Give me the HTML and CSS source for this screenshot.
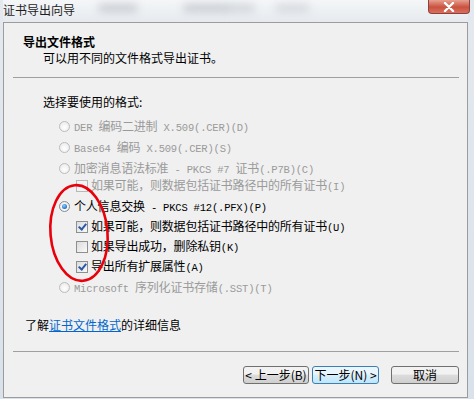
FILE: index.html
```html
<!DOCTYPE html>
<html>

<head lang="zh-CN">
    <meta charset="UTF-8">
    <title>证书导出向导</title>
    <link rel="stylesheet" href="styles.css">
</head>

<body>
    <div class="window">
        <!-- 标题栏 -->
        <div class="titlebar">
            <span class="title">证书导出向导</span>
            <i class="blur b1"></i><i class="blur b2"></i><i class="blur b3"></i><i class="blur b4"></i>
            <a href="#" class="close">
                <svg width="12" height="10" viewBox="0 0 12 10">
                    <path d="M2 1 L10 9 M10 1 L2 9" stroke="#fff" stroke-width="2.4" stroke-linecap="round" />
                </svg>
            </a>
        </div>

        <div class="client">
            <div class="header">
                <h1>导出文件格式</h1>
                <p>可以用不同的文件格式导出证书。</p>
            </div>

            <div class="content">
                <p class="prompt">选择要使用的格式:</p>
                <ul class="options">
                    <li class="row off"><span class="radio"></span><span class="mono">DER </span>编码二进制<span class="mono"> X.509(.CER)(D)</span></li>
                    <li class="row off"><span class="radio"></span><span class="mono">Base64 </span>编码<span class="mono"> X.509(.CER)(S)</span></li>
                    <li class="row off"><span class="radio"></span>加密消息语法标准<span class="mono"> - PKCS #7 </span>证书<span class="mono">(.P7B)(C)</span></li>
                    <li class="row sub off first"><span class="check"></span>如果可能，则数据包括证书路径中的所有证书<span class="mono">(I)</span></li>
                    <li class="row"><span class="radio on"></span>个人信息交换<span class="mono"> - PKCS #12(.PFX)(P)</span></li>
                    <li class="row sub"><span class="check on"></span>如果可能，则数据包括证书路径中的所有证书<span class="mono">(U)</span></li>
                    <li class="row sub"><span class="check"></span>如果导出成功，删除私钥<span class="mono">(K)</span></li>
                    <li class="row sub"><span class="check on"></span>导出所有扩展属性<span class="mono">(A)</span></li>
                    <li class="row off"><span class="radio"></span><span class="mono">Microsoft </span>序列化证书存储<span class="mono">(.SST)(T)</span></li>
                </ul>
                <p class="more">了解<a href="#">证书文件格式</a>的详细信息</p>
            </div>

            <div class="footer">
                <button class="btn">&lt; 上一步(B)</button>
                <button class="btn focus">下一步(N) &gt;</button>
                <button class="btn cancel">取消</button>
            </div>

            <!-- 红圈标注 -->
            <svg class="mark" width="72" height="110" viewBox="0 0 72 110">
                <ellipse cx="35" cy="54" rx="28.5" ry="48" fill="none" stroke="#e8000b" stroke-width="2.6" transform="rotate(-5 35 54)" />
            </svg>
        </div>
    </div>
</body>

</html>
```

FILE: styles.css
```css
/*初始化  reset*/
body,
h1,
p,
ul,
li,
button {
    margin: 0;
    padding: 0
}

ul {
    list-style: none
}

a {
    text-decoration: none
}

body {
    width: 474px;
    height: 399px;
    overflow: hidden;
    background: linear-gradient(#e4e9ef, #d9e1ea);
    font: 12px/16px "Noto Sans CJK SC", sans-serif;
    color: #000;
}

.window {
    padding-left: 3px;
    width: 465px;
}

/* 标题栏 */
.titlebar {
    height: 22px;
    position: relative;
    background: linear-gradient(#f4f6f8, #e6eaee);
}

.title {
    display: block;
    line-height: 20px;
    font-size: 12px;
    color: #1e1e1e;
}

.blur {
    position: absolute;
    top: 4px;
    height: 8px;
    border-radius: 6px;
    background: #9aa0a8;
    filter: blur(4px);
    opacity: 0.45;
}

.b1 { left: 95px; width: 40px; }
.b2 { left: 180px; width: 45px; }
.b3 { left: 222px; width: 30px; opacity: 0.35; }
.b4 { left: 272px; width: 35px; opacity: 0.3; }

.close {
    position: absolute;
    right: -2px;
    top: 0;
    width: 42px;
    height: 14px;
    display: flex;
    align-items: center;
    justify-content: center;
    border: 1px solid #8c4040;
    border-top: 0;
    border-radius: 0 0 4px 4px;
    background: linear-gradient(#e8a090, #c9523f 55%, #d9705d);
    box-sizing: border-box;
}

/* 主体 */
.client {
    position: relative;
    height: 376px;
    box-sizing: border-box;
    border: 1px solid #9c9c9c;
    background: #f0f0f0;
    display: flex;
    flex-direction: column;
}

.header {
    height: 55px;
    padding: 11px 0 0 10px;
    margin: 0 8px 0 9px;
    border-bottom: 1px solid #a0a0a0;
    box-sizing: border-box;
}

.header h1 {
    font-size: 12px;
    font-weight: bold;
}

.header p {
    padding-left: 20px;
}

.content {
    padding-top: 16px;
}

.prompt {
    padding-left: 39px;
}

.options {
    padding: 5px 0 0 55px;
}

.row {
    height: 21px;
    line-height: 21px;
    white-space: nowrap;
    letter-spacing: -0.2px;
}

.row.sub {
    height: 20px;
    line-height: 20px;
    padding-left: 17px;
}

.row.first {
    margin-top: -3px;
}

.row.off {
    color: #9a9a9a;
}

.mono {
    font-family: "Liberation Mono", monospace;
    font-size: 10.5px;
    white-space: pre;
    letter-spacing: -0.2px;
}

.radio {
    display: inline-block;
    vertical-align: -1px;
    width: 11px;
    height: 11px;
    margin-right: 4px;
    border-radius: 50%;
    border: 1px solid #bcbcbc;
    background: radial-gradient(circle at 50% 60%, #ffffff, #e6e6e6);
    box-sizing: border-box;
    position: relative;
}

.radio.on {
    border-color: #8a8a8a;
}

.radio.on::after {
    content: "";
    position: absolute;
    left: 2px;
    top: 2px;
    width: 5px;
    height: 5px;
    border-radius: 50%;
    background: radial-gradient(circle at 40% 35%, #8fd0ff, #1c6fc8 70%);
}

.check {
    display: inline-block;
    vertical-align: -2px;
    width: 12px;
    height: 12px;
    margin-right: 3px;
    border: 1px solid #8e8f8f;
    background: linear-gradient(135deg, #dcdcdc, #f9f9f9);
    box-sizing: border-box;
    position: relative;
}

.off .check {
    border-color: #b8b8b8;
    background: #f2f2f2;
}

.check.on::after {
    content: "";
    position: absolute;
    left: 3px;
    top: 0px;
    width: 3px;
    height: 6px;
    border: solid #2b5aa8;
    border-width: 0 2px 2px 0;
    transform: rotate(40deg);
}

.more {
    margin-top: 20px;
    padding-left: 21px;
}

.more a {
    color: #0066cc;
    text-decoration: underline;
}

/* 底部按钮 */
.footer {
    margin: 18px 8px 0 9px;
    padding-top: 14px;
    border-top: 1px solid #a0a0a0;
    display: flex;
    justify-content: flex-end;
}

.btn {
    width: 66px;
    height: 18px;
    font: 12px/14px "Noto Sans CJK SC", sans-serif;
    color: #000;
    border: 1px solid #707070;
    border-radius: 3px;
    background: linear-gradient(#f2f2f2 45%, #dcdcdc 50%, #cfcfcf);
}

.btn.focus {
    width: 67px;
    margin-left: 3px;
    border-color: #3c7fb1;
    background: linear-gradient(#eaf6fd 45%, #d9f0fc 50%, #bee6fd);
}

.btn.cancel {
    width: 68px;
    margin-left: 12px;
}

/* 红圈标注 */
.mark {
    position: absolute;
    left: 40px;
    top: 156px;
}
```
